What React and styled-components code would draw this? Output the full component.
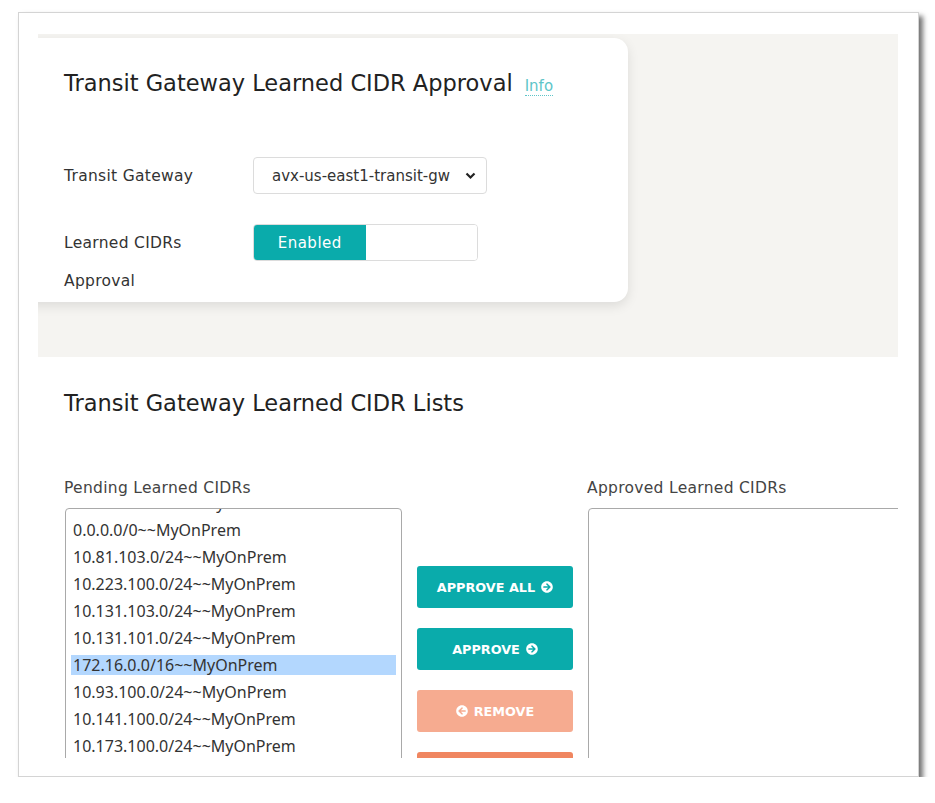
import React from 'react';
import styled, { createGlobalStyle } from 'styled-components';
import { FaArrowCircleRight, FaArrowCircleLeft } from 'react-icons/fa';

const GlobalStyle = createGlobalStyle`
  body {
    margin: 0;
    background: #fff;
    font-family: 'DejaVu Sans', 'Noto Sans', sans-serif;
    color: #333;
  }
`;

const Frame = styled.div`
  box-sizing: border-box;
  margin: 12px 0 0 18px;
  width: 901px;
  height: 765px;
  padding: 21px 20px 18px 19px;
  background: #fff;
  border: 1px solid #d4d4d4;
  box-shadow: 4px 4px 5px rgba(0, 0, 0, 0.55);
`;

const Viewport = styled.div`
  width: 860px;
  height: 724px;
  overflow: hidden;
  background: #fff;
`;

const GraySection = styled.section`
  box-sizing: border-box;
  height: 323px;
  padding-top: 4px;
  background: #f5f4f1;
`;

const Card = styled.div`
  box-sizing: border-box;
  margin-left: -20px;
  width: 610px;
  height: 264px;
  padding: 30px 0 0 46px;
  background: #fff;
  border-radius: 14px;
  box-shadow: 0 4px 12px rgba(0, 0, 0, 0.1);
`;

const Title = styled.h2`
  margin: 0;
  font-size: 22.5px;
  font-weight: 400;
  line-height: 30px;
  color: #222;
  display: flex;
  align-items: baseline;
  gap: 12px;
`;

const InfoLink = styled.span`
  font-size: 15px;
  color: #5ec5c8;
  border-bottom: 1px dotted #5ec5c8;
  line-height: 18px;
`;

const Form = styled.div`
  margin-top: 59px;
  display: grid;
  grid-template-columns: 189px 1fr;
  row-gap: 29px;
`;

const Label = styled.div`
  font-size: 15.5px;
  letter-spacing: 0.3px;
  line-height: 38px;
  color: #333;
  width: 130px;
`;

const SelectBox = styled.div`
  box-sizing: border-box;
  width: 234px;
  height: 37px;
  padding: 0 10px 0 18px;
  display: flex;
  align-items: center;
  justify-content: space-between;
  border: 1px solid #dcdcdc;
  border-radius: 4px;
  font-size: 15px;
  color: #333;
`;

const Toggle = styled.div`
  box-sizing: border-box;
  width: 225px;
  height: 37px;
  display: flex;
  border: 1px solid #dcdcdc;
  border-radius: 4px;
  overflow: hidden;
`;

const ToggleOption = styled.div`
  width: 113px;
  display: flex;
  align-items: center;
  justify-content: center;
  font-size: 15px;
  letter-spacing: 0.5px;
  color: ${(p) => (p.$active ? '#fff' : '#333')};
  background: ${(p) => (p.$active ? '#0aabab' : '#fff')};
`;

const ListsSection = styled.section`
  padding: 31px 0 0 26px;
`;

const SectionTitle = styled.h2`
  margin: 0;
  font-size: 22.5px;
  font-weight: 400;
  line-height: 30px;
  color: #222;
`;

const Columns = styled.div`
  margin-top: 60px;
  margin-left: 1px;
  display: grid;
  grid-template-columns: 337px 156px 337px;
  column-gap: 15px;
  align-items: start;
`;

const ColLabel = styled.div`
  font-size: 15.5px;
  letter-spacing: 0.3px;
  line-height: 20px;
  color: #444;
  margin: 0 0 10px -1px;
`;

const ListBox = styled.div`
  box-sizing: border-box;
  height: 300px;
  padding: 0 5px;
  border: 1px solid #a9a9a9;
  border-radius: 4px;
  overflow: hidden;
`;

const ListScroll = styled.div`
  margin-top: ${(p) => -p.$offset}px;
`;

const Item = styled.div`
  height: 20px;
  line-height: 20px;
  margin-bottom: 7px;
  padding-left: 2px;
  font-family: 'Noto Sans', sans-serif;
  font-size: 16px;
  color: #333;
  white-space: nowrap;
  background: ${(p) => (p.$selected ? '#b3d7fe' : 'transparent')};
`;

const ButtonStack = styled.div`
  padding-top: 88px;
  display: flex;
  flex-direction: column;
  gap: 20px;
`;

const ActionButton = styled.button`
  height: 42px;
  width: 156px;
  border: none;
  border-radius: 3px;
  display: flex;
  align-items: center;
  justify-content: center;
  gap: 6px;
  font-family: inherit;
  font-size: 12.8px;
  font-weight: 700;
  color: #fff;
  background: ${(p) => p.$bg};
  svg {
    width: 12px;
    height: 12px;
  }
`;

const pending = [
  '10.81.100.0/24~~MyOnPrem',
  '0.0.0.0/0~~MyOnPrem',
  '10.81.103.0/24~~MyOnPrem',
  '10.223.100.0/24~~MyOnPrem',
  '10.131.103.0/24~~MyOnPrem',
  '10.131.101.0/24~~MyOnPrem',
  '172.16.0.0/16~~MyOnPrem',
  '10.93.100.0/24~~MyOnPrem',
  '10.141.100.0/24~~MyOnPrem',
  '10.173.100.0/24~~MyOnPrem',
  '10.191.100.0/24~~MyOnPrem',
];

const Chevron = () => (
  <svg width="11" height="8" viewBox="0 0 11 8">
    <path d="M1.5 1.5 L5.5 5.5 L9.5 1.5" fill="none" stroke="#222" strokeWidth="2.2" />
  </svg>
);

export default function App() {
  return (
    <>
      <GlobalStyle />
      <Frame>
        <Viewport>
          <GraySection>
            <Card>
              <Title>
                Transit Gateway Learned CIDR Approval
                <InfoLink>Info</InfoLink>
              </Title>
              <Form>
                <Label>Transit Gateway</Label>
                <SelectBox>
                  <span>avx-us-east1-transit-gw</span>
                  <Chevron />
                </SelectBox>
                <Label>Learned CIDRs Approval</Label>
                <Toggle>
                  <ToggleOption $active>Enabled</ToggleOption>
                  <ToggleOption />
                </Toggle>
              </Form>
            </Card>
          </GraySection>
          <ListsSection>
            <SectionTitle>Transit Gateway Learned CIDR Lists</SectionTitle>
            <Columns>
              <div>
                <ColLabel>Pending Learned CIDRs</ColLabel>
                <ListBox>
                  <ListScroll $offset={16}>
                    {pending.map((c) => (
                      <Item key={c} $selected={c.startsWith('172.16')}>
                        {c}
                      </Item>
                    ))}
                  </ListScroll>
                </ListBox>
              </div>
              <ButtonStack>
                <ActionButton $bg="#0aabab">
                  APPROVE ALL <FaArrowCircleRight />
                </ActionButton>
                <ActionButton $bg="#0aabab">
                  APPROVE <FaArrowCircleRight />
                </ActionButton>
                <ActionButton $bg="#f6ab90">
                  <FaArrowCircleLeft /> REMOVE
                </ActionButton>
                <ActionButton $bg="#f08660">
                  <FaArrowCircleLeft /> REMOVE ALL
                </ActionButton>
              </ButtonStack>
              <div>
                <ColLabel>Approved Learned CIDRs</ColLabel>
                <ListBox />
              </div>
            </Columns>
          </ListsSection>
        </Viewport>
      </Frame>
    </>
  );
}
